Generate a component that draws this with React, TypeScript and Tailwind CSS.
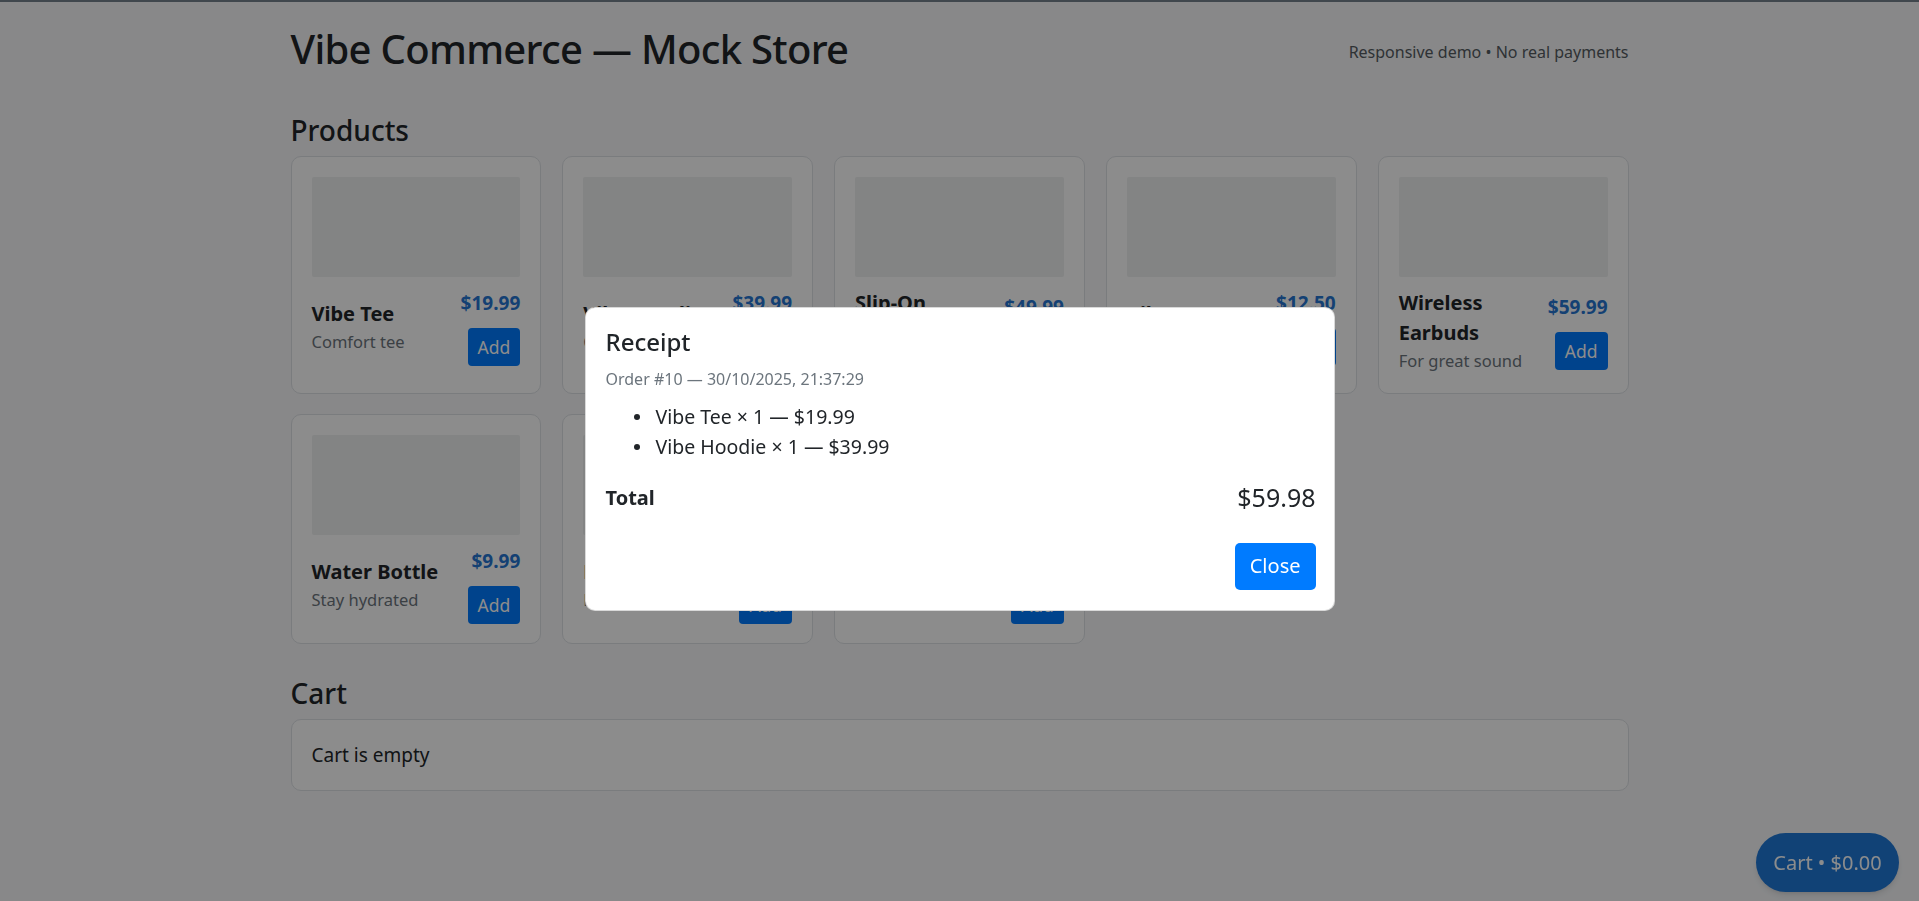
import React from "react";

type Product = {
  id: number;
  name: string;
  desc: string;
  price: number;
};

const products: Product[] = [
  { id: 1, name: "Vibe Tee", desc: "Comfort tee", price: 19.99 },
  { id: 2, name: "Vibe Hoodie", desc: "Cozy & warm", price: 39.99 },
  { id: 3, name: "Slip-On Sneakers", desc: "Everyday kicks", price: 49.99 },
  { id: 4, name: "Vibe Mug", desc: "For your coffee", price: 12.5 },
  { id: 5, name: "Wireless Earbuds", desc: "For great sound", price: 59.99 },
  { id: 6, name: "Water Bottle", desc: "Stay hydrated", price: 9.99 },
  { id: 7, name: "Desk Lamp", desc: "Light it up", price: 24.99 },
  { id: 8, name: "Phone Case", desc: "Keep it safe", price: 14.99 },
];

const receipt = {
  id: 10,
  date: "30/10/2025, 21:37:29",
  items: [
    { name: "Vibe Tee", qty: 1, price: 19.99 },
    { name: "Vibe Hoodie", qty: 1, price: 39.99 },
  ],
  total: 59.98,
};

function ProductCard({ p }: { p: Product }) {
  return (
    <div className="rounded-[10px] border border-[#dfe2e6] bg-white px-5 pb-[19px] pt-5">
      <div className="mb-[11px] h-[100px] rounded-[2px] bg-[#eef1f0]" />
      <div className="flex items-center justify-between gap-3">
        <div>
          <div className="text-[20px] font-bold leading-[30px]">{p.name}</div>
          <div className="text-[16.5px] leading-[26px] text-[#6c757d]">{p.desc}</div>
        </div>
        <div className="flex shrink-0 flex-col items-end gap-[10px]">
          <div className="text-[19px] font-bold leading-[30px] text-[#2576d2]">
            ${p.price.toFixed(2)}
          </div>
          <button className="h-[38px] rounded-[4px] bg-[#007bff] px-[10px] text-[17.5px] leading-[26px] text-white">
            Add
          </button>
        </div>
      </div>
    </div>
  );
}

export default function App() {
  return (
    <div className="min-h-screen bg-[#f7f8fa] font-['Noto_Sans',sans-serif] text-[#212529]">
      <div className="h-[2px] bg-[#76818c]" />
      <div className="mx-auto w-[1338px] pb-10">
        <header className="flex items-center justify-between pt-[20px]">
          <h1 className="pt-[3px] text-[40px] font-medium leading-[48px] tracking-[-0.7px]">
            Vibe Commerce — Mock Store
          </h1>
          <span className="mt-[8px] text-[16px] text-[#555b61]">Responsive demo • No real payments</span>
        </header>

        <h2 className="mb-[8px] mt-[41px] text-[28px] font-medium leading-[33.6px]">Products</h2>
        <div className="grid grid-cols-5 items-stretch gap-x-[21px] gap-y-[20px]">
          {products.map((p) => (
            <ProductCard key={p.id} p={p} />
          ))}
        </div>

        <h2 className="mb-[9px] mt-[33px] text-[28px] font-medium leading-[33.6px]">Cart</h2>
        <div className="rounded-[10px] border border-[#dfe2e6] bg-white p-5 text-[19px] leading-[30px]">
          Cart is empty
        </div>
      </div>

      <button className="fixed bottom-[9px] right-[20px] h-[59px] w-[143px] rounded-full bg-[#1f78d8] text-[20px] text-white shadow-md">
        Cart • $0.00
      </button>

      <div className="fixed inset-0 bg-black/45" />

      <div className="fixed inset-0 flex items-start justify-center pt-[307px]">
        <div className="w-[750px] rounded-[10px] border border-black/15 bg-white py-5 pl-5 pr-[18px]">
          <h5 className="mb-[10px] text-[24px] font-medium leading-[28.8px]">Receipt</h5>
          <div className="mb-[10px] text-[16px] leading-[25.5px] text-[#6c757d]">
            Order #{receipt.id} — {receipt.date}
          </div>
          <ul className="mb-[17px] pl-[28px]">
            {receipt.items.map((it) => (
              <li key={it.name} className="flex items-center text-[19.5px] leading-[30px]">
                <span className="mr-[16px] h-[6px] w-[6px] rounded-full bg-[#212529]" />
                {it.name} × {it.qty} — ${it.price.toFixed(2)}
              </li>
            ))}
          </ul>
          <div className="flex items-center justify-between">
            <span className="text-[20px] font-bold leading-[30px]">Total</span>
            <span className="text-[25px] leading-[37.5px]">${receipt.total.toFixed(2)}</span>
          </div>
          <div className="mt-[26px] flex justify-end">
            <button className="h-[47px] rounded-[5px] bg-[#007bff] px-[15px] text-[20px] leading-[30px] text-white">
              Close
            </button>
          </div>
        </div>
      </div>
    </div>
  );
}
